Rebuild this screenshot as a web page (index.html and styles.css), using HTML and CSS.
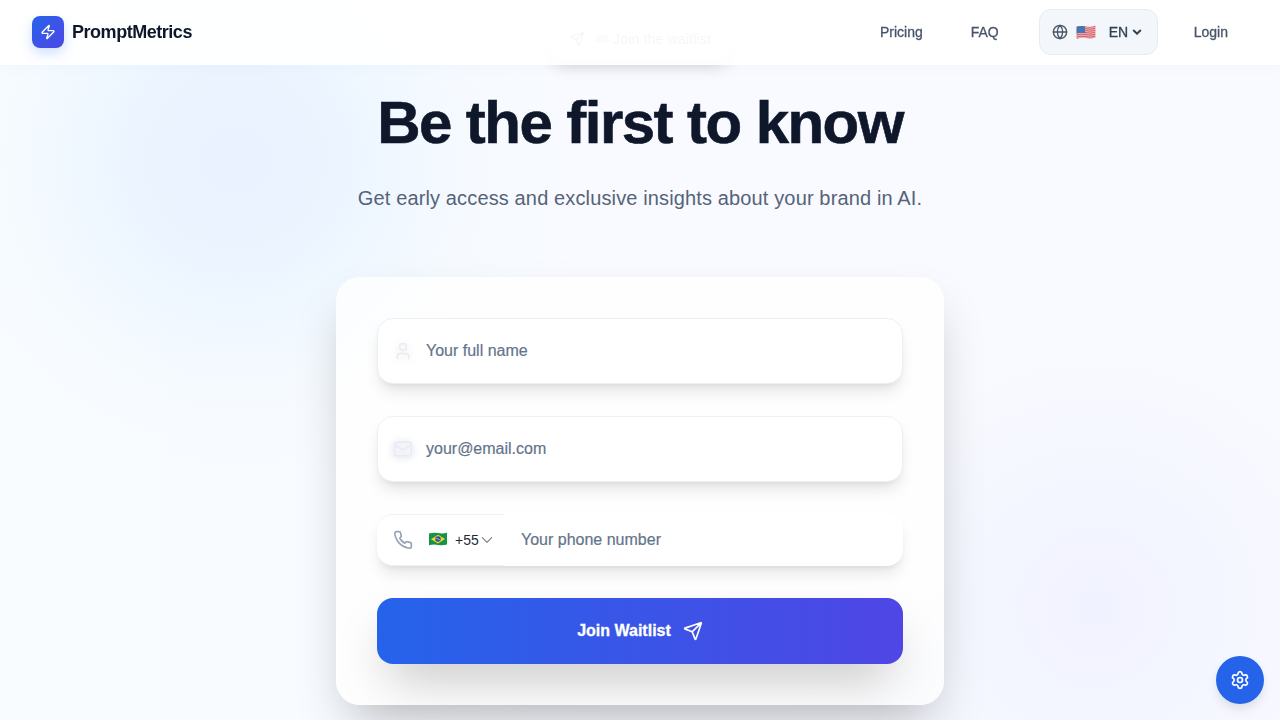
FILE: index.html
```html
<!DOCTYPE html>
<html lang="en">
<head>
<meta charset="utf-8">
<title>PromptMetrics</title>
<link rel="stylesheet" href="styles.css">
</head>
<body>
<header class="header">
  <a class="brand">
    <span class="brand-mark"><svg class="icon" width="16" height="16" viewBox="0 0 24 24"><path d="M4 14a1 1 0 0 1-.78-1.63l9.9-10.2a.5.5 0 0 1 .86.46l-1.92 6.02A1 1 0 0 0 13 10h7a1 1 0 0 1 .78 1.63l-9.9 10.2a.5.5 0 0 1-.86-.46l1.92-6.02A1 1 0 0 0 11 14z"/></svg></span>
    <span class="brand-name">PromptMetrics</span>
  </a>
  <nav class="nav">
    <a class="nav-link pricing">Pricing</a>
    <a class="nav-link faq">FAQ</a>
    <div class="lang">
      <svg class="icon" width="16" height="16" viewBox="0 0 24 24"><circle cx="12" cy="12" r="10"/><path d="M12 2a14.5 14.5 0 0 0 0 20 14.5 14.5 0 0 0 0-20M2 12h20"/></svg>
      <svg class="flag-us" width="20" height="15" viewBox="0 0 20 15">
        <defs><clipPath id="us-wave"><path d="M.6 1.8Q5 .2 10 1.4T19.4.6V12.4Q15 14 10 13T.6 14z"/></clipPath></defs>
        <g clip-path="url(#us-wave)"><path fill="#f0cdd1" d="M0 0h20v15H0z"/><path stroke="#d9606a" stroke-width="1.2" fill="none" d="M0 2.1Q5 .5 10 1.7T20 .9M0 4.1Q5 2.5 10 3.7T20 2.9M0 6.1Q5 4.5 10 5.7T20 4.9M0 8.1Q5 6.5 10 7.7T20 6.9M0 10.1Q5 8.5 10 9.7T20 8.9M0 12.1Q5 10.5 10 11.7T20 10.9M0 14.1Q5 12.5 10 13.7T20 12.9"/><path fill="#4475b6" d="M0 0h9v8.2Q5 7.2 0 8.5z"/></g>
      </svg>
      <span class="lang-code">EN</span>
      <svg class="lang-arrow" width="10" height="6" viewBox="0 0 10 6"><path d="M1.2 1.1 5 4.7 8.800 1.100"/></svg>
    </div>
    <a class="nav-link login">Login</a>
  </nav>
</header>

<main class="waitlist">
  <div class="pill">
    <svg class="icon" width="16" height="16" viewBox="0 0 24 24"><path d="M14.54 21.69a.5.5 0 0 0 .93-.03l6.5-19a.5.5 0 0 0-.63-.63l-19 6.5a.5.5 0 0 0-.03.93l7.93 3.18a2 2 0 0 1 1.11 1.11zM21.85 2.15l-10.94 10.94"/></svg>
    <span class="pill-dot"></span>
    <span class="pill-text">Join the waitlist</span>
  </div>
  <h1 class="title">Be the first to know</h1>
  <p class="subtitle">Get early access and exclusive insights about your brand in AI.</p>

  <form class="card">
    <div class="field">
      <svg class="icon ghost" width="20" height="20" viewBox="0 0 24 24"><path d="M19 21v-2a4 4 0 0 0-4-4H9a4 4 0 0 0-4 4v2"/><circle cx="12" cy="7" r="4"/></svg>
      <span class="placeholder name-text">Your full name</span>
    </div>
    <div class="field">
      <svg class="icon ghost ghost-mail" width="20" height="20" viewBox="0 0 24 24"><rect x="2" y="4" width="20" height="16" rx="2"/><path d="m22 7-8.97 5.7a1.94 1.94 0 0 1-2.06 0L2 7"/></svg>
      <span class="placeholder mail-text">your@email.com</span>
    </div>
    <div class="phone">
      <div class="country">
        <svg class="icon phone-icon" width="20" height="20" viewBox="0 0 24 24"><path d="M22 16.92v3a2 2 0 0 1-2.18 2 19.79 19.79 0 0 1-8.63-3.07 19.5 19.5 0 0 1-6-6 19.79 19.79 0 0 1-3.07-8.67A2 2 0 0 1 4.11 2h3a2 2 0 0 1 2 1.72 12.84 12.84 0 0 0 .7 2.81 2 2 0 0 1-.45 2.11L8.09 9.91a16 16 0 0 0 6 6l1.27-1.27a2 2 0 0 1 2.11-.45 12.84 12.84 0 0 0 2.81.7A2 2 0 0 1 22 16.92z"/></svg>
        <svg class="flag-br" width="18" height="14" viewBox="0 0 18 14"><path fill="#159447" d="M0 1.4Q4.500.300 9 1.100T18 .7V12.500Q13.500 13.600 9 12.900T0 13.200z"/><path fill="#f7d52c" d="m2 7.300 7-4.600 7 4.200-7 4.700z"/><circle cx="9" cy="7" r="2.800" fill="#304b9b"/><path d="M6.500 6.500q2.500-.3 4.700 1.700" fill="none" stroke="#d4ddeb" stroke-width=".7"/></svg>
        <span class="dial">+55</span>
        <svg class="icon dial-arrow" width="14" height="14" viewBox="0 0 24 24"><path d="m4 8 8 8 8-8"/></svg>
      </div>
      <div class="phone-input"><span class="placeholder phone-text">Your phone number</span></div>
    </div>
    <div class="submit">
      <span class="submit-text">Join Waitlist</span>
      <svg class="icon" width="20" height="20" viewBox="0 0 24 24"><path d="M14.54 21.69a.5.5 0 0 0 .93-.03l6.5-19a.5.5 0 0 0-.63-.63l-19 6.5a.5.5 0 0 0-.03.93l7.93 3.18a2 2 0 0 1 1.11 1.11zM21.85 2.15l-10.94 10.94"/></svg>
    </div>
  </form>
</main>

<div class="settings"><svg class="icon" width="20" height="20" viewBox="0 0 24 24"><path d="M9.671 4.136a2.340 2.340 0 0 1 4.659 0 2.340 2.340 0 0 0 3.319 1.915 2.340 2.340 0 0 1 2.330 4.033 2.340 2.340 0 0 0 0 3.831 2.340 2.340 0 0 1-2.330 4.033 2.340 2.340 0 0 0-3.319 1.915 2.340 2.340 0 0 1-4.659 0 2.340 2.340 0 0 0-3.320-1.915 2.340 2.340 0 0 1-2.330-4.033 2.340 2.340 0 0 0 0-3.831A2.340 2.340 0 0 1 6.350 6.051a2.340 2.340 0 0 0 3.319-1.915"/><circle cx="12" cy="12" r="3"/></svg></div>
</body>
</html>
```
FILE: styles.css
```css
* { box-sizing: border-box; }
body {
  margin: 0;
  height: 720px;
  overflow: hidden;
  font-family: "Liberation Sans", Arial, sans-serif;
  color: #0f172a;
  background:
    radial-gradient(circle at 236px 160px, rgba(232, 240, 255, .85) 0, rgba(231, 242, 255, .8) 90px, rgba(236, 246, 255, .6) 170px, rgba(243, 249, 255, .3) 250px, rgba(248, 251, 255, 0) 330px),
    radial-gradient(circle at 1096px 608px, rgba(240, 241, 255, .9) 0, rgba(242, 244, 255, .75) 110px, rgba(247, 249, 255, 0) 260px),
    linear-gradient(90deg, #f8fcff, #f8faff 50%, #f9faff);
}
.icon {
  fill: none;
  stroke: currentColor;
  stroke-width: 2;
  stroke-linecap: round;
  stroke-linejoin: round;
  flex: none;
}
.header {
  position: fixed;
  inset: 0 0 auto;
  z-index: 2;
  height: 65px;
  padding: 0 32px;
  display: flex;
  align-items: center;
  justify-content: space-between;
  border-bottom: 1px solid rgba(255, 255, 255, .3);
  background: rgba(255, 255, 255, .93);
  box-shadow: 0 2px 12px rgba(100, 120, 190, .04);
}
.brand { display: flex; align-items: center; gap: 8px; }
.brand-mark {
  width: 32px;
  height: 32px;
  border-radius: 8px;
  display: grid;
  place-items: center;
  color: #fff;
  background: linear-gradient(135deg, #2563eb, #4f46e5);
  box-shadow: 0 5px 12px rgba(59, 130, 246, .25);
}
.brand-name { font-size: 18px; line-height: 28px; font-weight: 700; letter-spacing: -.47px; }
.nav { display: flex; align-items: center; color: #475569; }
.nav-link { font-size: 14px; line-height: 20px; white-space: nowrap; -webkit-text-stroke: .3px; }
.faq { margin-left: 48px; }
.lang {
  width: 119px;
  height: 46px;
  margin: 0 36px 0 40px;
  padding: 0 12px;
  display: flex;
  align-items: center;
  border: 1px solid #e5eaf3;
  border-radius: 12px;
  background: #f3f6fa;
}
.flag-us { margin-left: 8px; }
.lang-code { margin-left: 13px; font-size: 14px; color: #334155; -webkit-text-stroke: .3px; }
.lang-arrow { margin-left: 4px; fill: none; stroke: #334155; stroke-width: 2; }
.login { margin-right: 20px; }

.waitlist { display: flex; flex-direction: column; align-items: center; padding-top: 17px; }
.pill {
  width: 190px;
  height: 43px;
  padding: 0 24px;
  display: flex;
  align-items: center;
  border-radius: 22px;
  color: #7681b5;
  background: rgba(255, 255, 255, .8);
  box-shadow: 0 10px 16px -4px rgba(0, 0, 0, .17);
}
.pill-dot { width: 16px; height: 8px; margin: 0 4px 0 10px; border-radius: 4px; background: #bbbfd0; }
.pill-text { font-size: 14px; letter-spacing: .18px; white-space: nowrap; }
.title { margin: 33px 0 0; font-size: 60px; line-height: 60px; font-weight: 700; letter-spacing: -1.55px; white-space: nowrap; -webkit-text-stroke: .6px; }
.subtitle { margin: 29px 0 0; font-size: 20px; line-height: 32px; letter-spacing: .135px; color: #566378; white-space: nowrap; }
.card {
  width: 608px;
  height: 428px;
  margin-top: 63px;
  padding: 41px;
  display: flex;
  flex-direction: column;
  border-radius: 24px;
  background: linear-gradient(135deg, #fbfdff, #fefefe 15%, #fefefe 85%, #fbfcff);
  box-shadow: 0 25px 50px -12px rgba(0, 0, 0, .25);
}
.field {
  flex: none;
  height: 66px;
  margin-bottom: 32px;
  padding: 0 15px;
  display: flex;
  align-items: center;
  gap: 13px;
  border: 1px solid #edf0f7;
  border-radius: 16px;
  background: #fff;
  box-shadow: 0 10px 15px -3px rgba(0, 0, 0, .1), 0 4px 6px -4px rgba(0, 0, 0, .1);
}
.ghost { color: #e9ebf2; stroke-width: 1.8; filter: drop-shadow(0 1px 4px rgba(60, 75, 120, .16)); }
.ghost-mail { fill: #f3f4f9; }
.placeholder { font-size: 16px; line-height: 24px; color: #64748b; white-space: nowrap; -webkit-text-stroke: .2px; }
.phone {
  flex: none;
  height: 52px;
  margin-bottom: 32px;
  display: flex;
  border-radius: 16px;
  background: #fff;
  box-shadow: 0 10px 15px -3px rgba(0, 0, 0, .1), 0 4px 6px -4px rgba(0, 0, 0, .1);
}
.country {
  width: 127px;
  padding-left: 16px;
  display: flex;
  align-items: center;
  border: solid #edf0f7;
  border-width: 1px 0;
  border-radius: 16px 0 0 16px;
}
.phone-icon { color: #94a3b8; }
.flag-br { margin: 0 0 2px 16px; }
.dial { margin-left: 8px; font-size: 14px; color: #1e293b; }
.dial-arrow { margin-left: 1px; color: #808080; }
.phone-input { display: flex; align-items: center; padding-left: 17px; }
.submit {
  flex: none;
  height: 66px;
  display: flex;
  align-items: center;
  justify-content: center;
  gap: 12px;
  border-radius: 16px;
  color: #fff;
  background: linear-gradient(90deg, #2563eb, #4f46e5);
  box-shadow: 0 25px 50px -12px rgba(0, 0, 0, .25);
}
.submit-text { font-size: 16px; line-height: 24px; font-weight: 700; white-space: nowrap; -webkit-text-stroke: .3px; }
.settings {
  position: fixed;
  right: 16px;
  bottom: 16px;
  z-index: 3;
  width: 48px;
  height: 48px;
  display: grid;
  place-items: center;
  border-radius: 50%;
  color: #fff;
  background: #2563eb;
  box-shadow: 0 6px 12px -2px rgba(0, 0, 0, .13);
}
```
